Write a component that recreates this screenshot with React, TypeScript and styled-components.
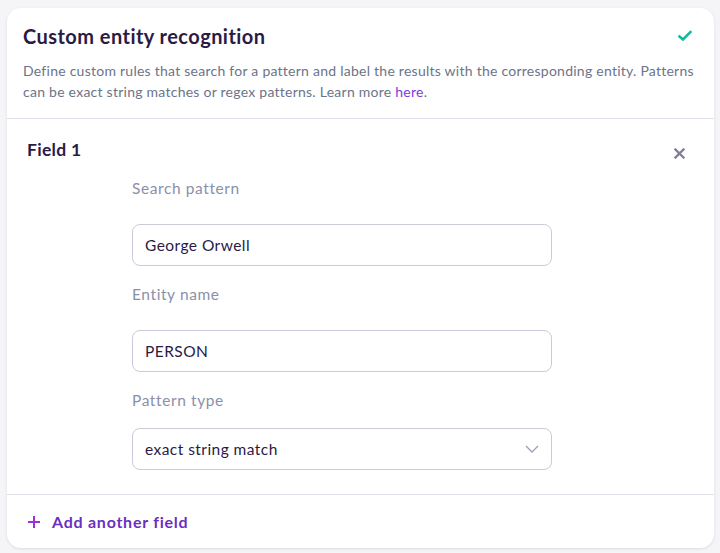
import React from "react";
import styled, { createGlobalStyle } from "styled-components";

const Global = createGlobalStyle`
  html, body { margin: 0; padding: 0; background: #f5f5f8; }
  body { font-family: Lato, "Noto Sans", sans-serif; -webkit-font-smoothing: antialiased; }
  * { box-sizing: border-box; }
`;

const Page = styled.div`
  padding: 8px 6px 6px 7px;
`;

const Card = styled.section`
  background: #fff;
  border-radius: 14px;
  box-shadow: 0 1px 3px rgba(40, 30, 70, 0.12);
  overflow: hidden;
`;

const Header = styled.header`
  padding: 16px 14px 16px 16px;
  border-bottom: 1px solid #e0dfe8;
`;

const TitleRow = styled.div`
  display: flex;
  align-items: center;
  justify-content: space-between;
  height: 24px;
  padding-right: 8px;
`;

const Title = styled.h2`
  margin: 0;
  font-size: 20px;
  font-weight: 700;
  color: #2a1b45;
  letter-spacing: 0.45px;
`;

const Desc = styled.p`
  margin: 12px 0 0 0;
  font-size: 14px;
  line-height: 21px;
  letter-spacing: 0.25px;
  color: #6c7489;
`;

const Link = styled.a`
  color: #7a3ed8;
  text-decoration: none;
`;

const FieldBlock = styled.div`
  padding: 19px 29px 24px 20px;
  border-bottom: 1px solid #e0dfe8;
`;

const FieldHead = styled.div`
  display: flex;
  justify-content: space-between;
  align-items: flex-start;
`;

const FieldTitle = styled.h3`
  margin: 0;
  font-size: 17.5px;
  font-weight: 700;
  color: #2a1b45;
  line-height: 24px;
  letter-spacing: 0.3px;
`;

const CloseBtn = styled.button`
  border: 0;
  background: none;
  padding: 0;
  margin-top: 10px;
  width: 11px;
  height: 11px;
  display: flex;
  cursor: pointer;
`;

const Form = styled.div`
  margin-left: 105px;
  width: 420px;
  display: flex;
  flex-direction: column;
  padding-top: 16px;
`;

const Label = styled.label<{ $gap: number }>`
  font-size: 15.5px;
  color: #8b90a9;
  line-height: 20px;
  letter-spacing: 0.6px;
  margin-bottom: ${(p) => p.$gap}px;
`;

const InputBox = styled.div`
  height: 42px;
  border: 1px solid #c9cbdb;
  border-radius: 8px;
  display: flex;
  align-items: center;
  justify-content: space-between;
  padding: 0 12px;
  font-size: 15.5px;
  letter-spacing: 0.45px;
  color: #2a1b45;
  margin-bottom: 18px;
  &:last-child { margin-bottom: 0; }
`;

const Footer = styled.div`
  display: flex;
  align-items: center;
  gap: 11px;
  padding: 17px 20px 17px 20px;
  color: #6a2fc0;
  font-size: 16px;
  letter-spacing: 0.75px;
  font-weight: 700;
`;

export default function App() {
  return (
    <>
      <Global />
      <Page>
        <Card>
          <Header>
            <TitleRow>
              <Title>Custom entity recognition</Title>
              <svg width="14" height="12" viewBox="0 0 14 12">
                <path d="M1.5 6.5 L5 9.5 L12.5 2" fill="none" stroke="#14b89a" strokeWidth="2.6" strokeLinecap="square" />
              </svg>
            </TitleRow>
            <Desc>
              Define custom rules that search for a pattern and label the results with the corresponding entity. Patterns
              can be exact string matches or regex patterns. Learn more <Link href="#">here</Link>.
            </Desc>
          </Header>
          <FieldBlock>
            <FieldHead>
              <FieldTitle>Field 1</FieldTitle>
              <CloseBtn aria-label="remove">
                <svg width="11" height="11" viewBox="0 0 11 11">
                  <path d="M1.5 1.5 L9.5 9.5 M9.5 1.5 L1.5 9.5" stroke="#857c98" strokeWidth="2.3" strokeLinecap="square" />
                </svg>
              </CloseBtn>
            </FieldHead>
            <Form>
              <Label $gap={26}>Search pattern</Label>
              <InputBox>George Orwell</InputBox>
              <Label $gap={26}>Entity name</Label>
              <InputBox>PERSON</InputBox>
              <Label $gap={18}>Pattern type</Label>
              <InputBox>
                exact string match
                <svg width="14" height="8" viewBox="0 0 14 8">
                  <path d="M1 1 L7 7 L13 1" fill="none" stroke="#9ea3b8" strokeWidth="1.4" />
                </svg>
              </InputBox>
            </Form>
          </FieldBlock>
          <Footer>
            <svg width="14" height="14" viewBox="0 0 14 14">
              <path d="M7 1 V13 M1 7 H13" stroke="#9a32dc" strokeWidth="2" />
            </svg>
            Add another field
          </Footer>
        </Card>
      </Page>
    </>
  );
}
